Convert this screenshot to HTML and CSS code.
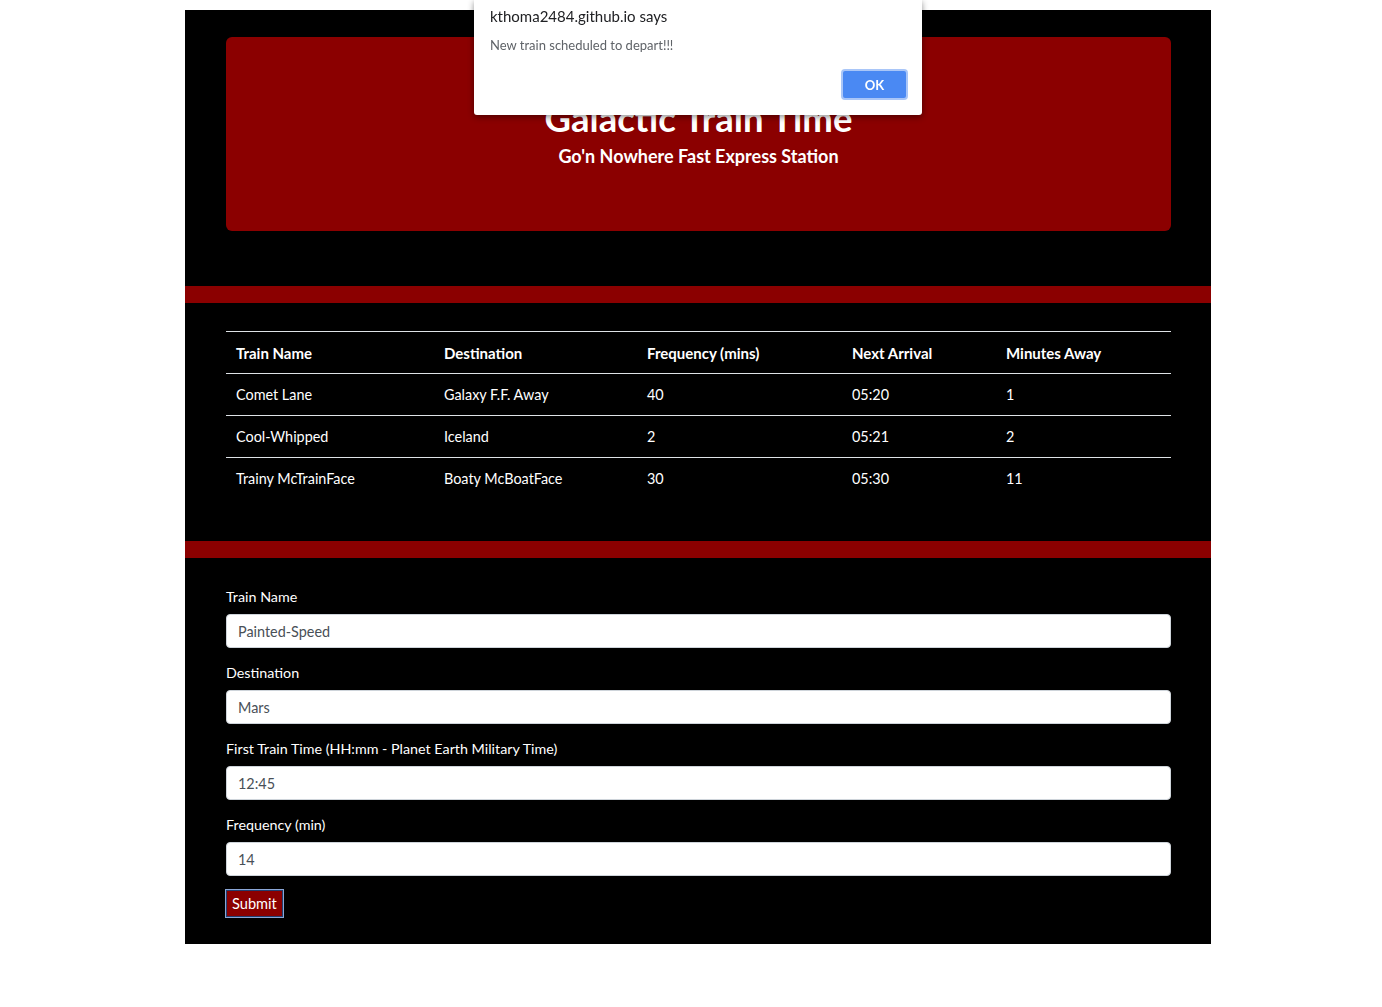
FILE: index.html
```html
<!DOCTYPE html>
<html lang="en">
<head>
<meta charset="utf-8">
<title>Galactic Train Time</title>
<link rel="stylesheet" href="styles.css">
</head>
<body>
<div class="page">
  <section class="top">
    <div class="jumbotron">
      <h1 class="title">Galactic Train Time</h1>
      <p class="subtitle">Go'n Nowhere Fast Express Station</p>
    </div>
  </section>
  <div class="bar"></div>
  <section class="schedule">
    <table class="trains">
      <thead>
        <tr>
          <th class="c1">Train Name</th>
          <th class="c2">Destination</th>
          <th class="c3">Frequency (mins)</th>
          <th class="c4">Next Arrival</th>
          <th class="c5">Minutes Away</th>
        </tr>
      </thead>
      <tbody>
        <tr><td>Comet Lane</td><td>Galaxy F.F. Away</td><td>40</td><td>05:20</td><td>1</td></tr>
        <tr><td>Cool-Whipped</td><td>Iceland</td><td>2</td><td>05:21</td><td>2</td></tr>
        <tr><td>Trainy McTrainFace</td><td>Boaty McBoatFace</td><td>30</td><td>05:30</td><td>11</td></tr>
      </tbody>
    </table>
  </section>
  <div class="bar"></div>
  <section class="add">
    <form class="train-form">
      <div class="group">
        <label for="name">Train Name</label>
        <input id="name" class="field" type="text" value="Painted-Speed">
      </div>
      <div class="group">
        <label for="dest">Destination</label>
        <input id="dest" class="field" type="text" value="Mars">
      </div>
      <div class="group">
        <label for="first">First Train Time (HH:mm - Planet Earth Military Time)</label>
        <input id="first" class="field" type="text" value="12:45">
      </div>
      <div class="group">
        <label for="freq">Frequency (min)</label>
        <input id="freq" class="field" type="text" value="14">
      </div>
      <button type="button" class="submit">Submit</button>
    </form>
  </section>
</div>

<div class="dialog">
  <div class="dialog-title">kthoma2484.github.io says</div>
  <div class="dialog-msg">New train scheduled to depart!!!</div>
  <div class="dialog-actions"><button type="button" class="ok">OK</button></div>
</div>
</body>
</html>
```

FILE: styles.css
```css
html, body {
  margin: 0;
  padding: 0;
  background: #fff;
}
body {
  font-family: "Lato", "Noto Sans", sans-serif;
  font-size: 14.5px;
  color: #fff;
}
.page {
  width: 1026px;
  margin: 10px 0 0 185px;
  background: #000;
  padding-bottom: 27px;
}
.top {
  padding: 27px 40px 55px 41px;
}
.jumbotron {
  background: #8b0000;
  border-radius: 6px;
  height: 194px;
  box-sizing: border-box;
  padding-top: 57px;
  text-align: center;
}
.title {
  margin: 0;
  font-size: 36.5px;
  font-weight: 700;
  line-height: 48px;
}
.subtitle {
  margin: 0;
  font-size: 18px;
  font-weight: 700;
  line-height: 28px;
}
.bar {
  height: 17px;
  background: #8b0000;
}
.schedule {
  padding: 28px 40px 42px 41px;
}
.trains {
  width: 100%;
  border-collapse: collapse;
}
.trains th, .trains td {
  text-align: left;
  padding: 9px 10px;
  line-height: 23px;
  border-top: 1px solid #dee2e6;
  font-size: 14.4px;
}
.trains th {
  font-weight: 700;
  font-size: 15px;
  padding-top: 10px;
  padding-bottom: 8px;
}
.trains thead th {
  border-bottom: 1px solid #dee2e6;
}
.trains tbody tr:first-child td {
  border-top: none;
}
.c1 { width: 188px; }
.c2 { width: 183px; }
.c3 { width: 185px; }
.c4 { width: 134px; }
.add {
  padding: 27px 40px 0 41px;
}
.group {
  margin-bottom: 13px;
}
.group label {
  display: block;
  line-height: 24px;
  margin-bottom: 5px;
  font-size: 14.3px;
}
.field {
  display: block;
  width: 100%;
  box-sizing: border-box;
  height: 34px;
  padding: 0 11px;
  font-family: inherit;
  font-size: 14.4px;
  color: #495057;
  background: #fff;
  border: 1px solid #ced4da;
  border-radius: 4px;
}
.submit {
  margin-top: 1px;
  height: 27px;
  padding: 0 5px;
  font-family: inherit;
  font-size: 14.6px;
  color: #fff;
  background: #8b0000;
  border: 1px solid #233e6e;
  outline: 1px solid #8aa6d6;
  outline-offset: 0;
}
.dialog {
  position: fixed;
  top: 0;
  left: 474px;
  width: 448px;
  height: 115px;
  box-sizing: border-box;
  background: #fff;
  border-radius: 0 0 3px 3px;
  box-shadow: 0 2px 6px rgba(0,0,0,0.45);
  padding: 5px 16px 0;
  font-family: "Lato", "Noto Sans", sans-serif;
}
.dialog-title {
  color: #202124;
  font-size: 15px;
  line-height: 22px;
}
.dialog-msg {
  margin-top: 9px;
  color: #5f6368;
  font-size: 13px;
  line-height: 18px;
}
.dialog-actions {
  display: flex;
  justify-content: flex-end;
  margin-top: 15px;
}
.ok {
  width: 67px;
  height: 31px;
  margin-right: -2px;
  background: #4a89f3;
  border: 2px solid #a9c6f8;
  border-radius: 4px;
  color: #fff;
  font-family: inherit;
  font-weight: 700;
  font-size: 13px;
}
```
